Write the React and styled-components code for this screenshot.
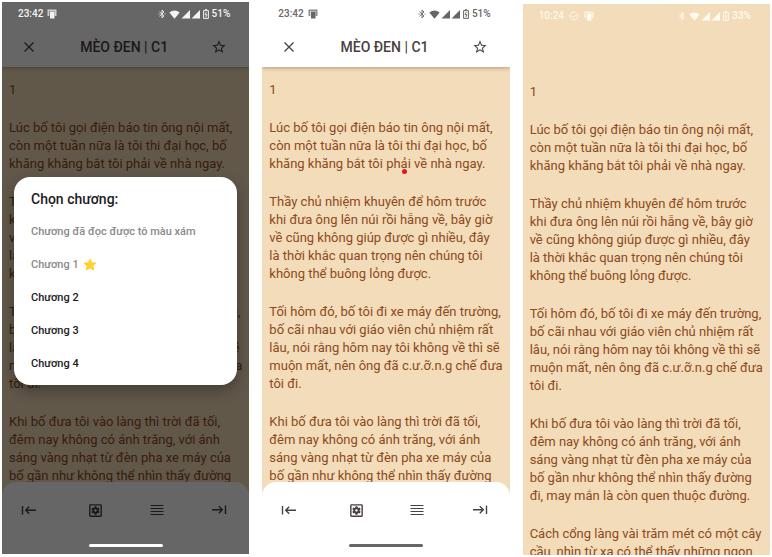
import React from "react";
import styled, { createGlobalStyle, css } from "styled-components";
import { MdStarBorder, MdOutlineSettingsApplications } from "react-icons/md";

const GlobalStyle = createGlobalStyle`
  *, *::before, *::after { box-sizing: border-box; }
  body {
    margin: 0;
    background: #fff;
    font-family: Roboto, "Noto Sans", sans-serif;
  }
  p, h1, h2, ul { margin: 0; padding: 0; }
`;

const Gallery = styled.main`
  display: grid;
  grid-template-columns: repeat(3, minmax(0, 1fr));
  gap: 13px;
  height: 100vh;
  padding: 2px;
`;

const Phone = styled.section`
  position: relative;
  display: flex;
  flex-direction: column;
  min-height: 0;
  overflow: hidden;
  background: #f2dcb9;
  ${(p) => (p.$fullScreen ? css`margin-top: 2px;` : css`margin-bottom: 1px;`)}
`;

const StatusBar = styled.div`
  position: relative;
  z-index: 3;
  flex: none;
  display: flex;
  align-items: center;
  justify-content: space-between;
  height: 24px;
  padding: 0 19px 0 16px;
  font-size: 10px;
  font-weight: 500;
  line-height: 12px;
  color: ${(p) => p.$color};
`;

const StatusGroup = styled.div`
  display: flex;
  align-items: center;
  gap: ${(p) => p.$gap}px;
`;

const TopArea = styled.div`
  position: relative;
  flex: none;
  margin-top: -24px;
  padding-top: 24px;
  background: #fff;
  box-shadow: 0 1px 4px rgba(60, 40, 10, 0.35);
`;

const TitleBar = styled.header`
  display: flex;
  align-items: center;
  justify-content: space-between;
  height: 41px;
  padding: 0 22px 0 19px;
  color: #4a3f42;
`;

const Title = styled.h1`
  font-size: 14px;
  line-height: 18px;
  font-weight: 500;
`;

const IconButton = styled.button`
  display: flex;
  align-items: center;
  justify-content: center;
  width: 16px;
  height: 16px;
  padding: 0;
  border: 0;
  background: none;
  color: inherit;
  cursor: pointer;

  svg { flex: none; }
`;

const Reader = styled.article`
  flex: 1;
  min-height: 0;
  overflow: hidden;
  display: flex;
  flex-direction: column;
  gap: 20px;
  padding: ${(p) => (p.$fullScreen ? 55 : 14)}px 0 0 7px;
  color: #8d4a1c;
`;

const Paragraph = styled.p`
  flex: none;
  font-size: 13px;
  line-height: 18px;
  white-space: pre-line;
`;

const BottomBar = styled.nav`
  position: relative;
  flex: none;
  margin-top: -14px;
  border-radius: 14px 14px 0 0;
  background: #fff;
  color: #4a3f42;
`;

const Tools = styled.div`
  display: grid;
  grid-template-columns: 67fr 61fr 63fr 16px;
  align-items: center;
  height: 56px;
  padding: 0 22px 0 19px;
`;

const HomeStripBase = styled.div`
  flex: none;
  height: 16px;
  margin-bottom: -16px;
  background: #fff;
`;

const HomeStrip = styled.div`
  position: relative;
  z-index: 3;
  flex: none;
  display: flex;
  justify-content: center;
  height: 16px;
  padding-top: 6px;
`;

const HomeHandle = styled.div`
  width: 74px;
  height: 3px;
  border-radius: 2px;
  background: ${(p) => p.$color};
`;

const Scrim = styled.div`
  position: absolute;
  inset: 0;
  z-index: 2;
  display: flex;
  align-items: center;
  justify-content: center;
  padding: 6px 12px 0;
  background: rgba(0, 0, 0, 0.6);
`;

const Dialog = styled.div`
  width: 100%;
  padding: 13px 17px 5px;
  border-radius: 16px;
  background: #fff;
  box-shadow: 0 6px 14px rgba(0, 0, 0, 0.3);
  color: #1d1b1e;
`;

const DialogTitle = styled.h2`
  margin-bottom: 7px;
  font-size: 14px;
  line-height: 18px;
  font-weight: 500;
`;

const Hint = styled.p`
  display: flex;
  align-items: center;
  height: 33px;
  font-size: 11px;
  font-weight: 500;
  color: #8a8a8a;
`;

const ChapterList = styled.ul`
  list-style: none;
`;

const Chapter = styled.button`
  display: flex;
  align-items: center;
  gap: 4px;
  width: 100%;
  height: 33px;
  padding: 0;
  border: 0;
  background: none;
  font: 500 11px/16px Roboto, "Noto Sans", sans-serif;
  color: ${(p) => (p.$read ? "#8a8a8a" : "#1d1b1e")};
  cursor: pointer;
`;

const TouchPoint = styled.span`
  position: absolute;
  top: 167px;
  left: 140px;
  width: 5px;
  height: 5px;
  border-radius: 50%;
  background: #e8141c;
`;

const Svg = ({ w = 16, h = 16, children }) => (
  <svg width={w} height={h} viewBox={`0 0 ${w} ${h}`} fill="none" stroke="currentColor" aria-hidden="true">
    {children}
  </svg>
);

const CloseIcon = () => (
  <Svg><path d="M3.500 3.500l9 9M12.500 3.500l-9 9" strokeWidth="1.300" /></Svg>
);

const FirstIcon = () => (
  <Svg><path d="M1.500 4v8.500M15 8.200H4.500M8.200 4.700L4.700 8.200l3.500 3.500" strokeWidth="1.400" /></Svg>
);

const LastIcon = () => (
  <Svg><path d="M14.500 3.500V12M1 7.700h10.500M7.800 4.200l3.500 3.500-3.500 3.500" strokeWidth="1.400" /></Svg>
);

const ListIcon = () => (
  <Svg><path d="M1.500 3.500h13M1.500 6.500h13M1.500 9.500h13M1.500 12.500h13" strokeWidth="1.200" /></Svg>
);

const ScreenIcon = () => (
  <Svg w={10} h={10}>
    <path d="M0.500 0.500h9v6.500h-1.800V2h-5.400v5H0.500z" fill="currentColor" fillOpacity="0.750" stroke="none" />
    <path d="M3 2.500h4.500v7H3z" fill="currentColor" stroke="none" />
  </Svg>
);

const TaskIcon = () => (
  <Svg w={10} h={10}>
    <path d="M8.700 3.800A4 4 0 1 1 6.600 1.300M3 5l1.500 1.500L9 1.800" strokeWidth="1" />
  </Svg>
);

const BluetoothIcon = () => (
  <Svg w={8} h={10}>
    <path d="M1.500 2.800l4.500 4.200L4 9V1l2 2-4.500 4.200M0.500 5h1M6.500 5h1" strokeWidth="0.900" />
  </Svg>
);

const WifiIcon = () => (
  <Svg w={11} h={9}>
    <path d="M0.300 2.500Q5.500-1.500 10.700 2.500L5.500 8.800z" fill="currentColor" stroke="none" />
  </Svg>
);

const SignalIcon = () => (
  <Svg w={9} h={9}>
    <path d="M9 0v8.500H0.500z" fill="currentColor" stroke="none" />
  </Svg>
);

const BatteryIcon = () => (
  <Svg w={6} h={10}>
    <path d="M0.600 1.600h4.800v7.800H0.600zM2 0.700h2" strokeWidth="1" />
    <path d="M3.400 3L2 5.700h2L2.700 8.300" strokeWidth="0.900" />
  </Svg>
);

const GoldStar = () => (
  <svg width="14" height="13" viewBox="0 0 14 13" role="img" aria-label="star">
    <path
      d="M7 1l1.700 3.700 4.300.4-3.200 2.800.9 4.100L7 9.900 3.300 12l.9-4.100L1 5.100l4.300-.4z"
      fill="#fdd32f"
      stroke="#fdd32f"
      strokeWidth="1"
      strokeLinejoin="round"
    />
  </svg>
);

const STORY = [
  "1",
  "Lúc bố tôi gọi điện báo tin ông nội mất,\ncòn một tuần nữa là tôi thi đại học, bố\nkhăng khăng bắt tôi phải về nhà ngay.",
  "Thầy chủ nhiệm khuyên để hôm trước\nkhi đưa ông lên núi rồi hẵng về, bây giờ\nvề cũng không giúp được gì nhiều, đây\nlà thời khắc quan trọng nên chúng tôi\nkhông thể buông lỏng được.",
  "Tối hôm đó, bố tôi đi xe máy đến trường,\nbố cãi nhau với giáo viên chủ nhiệm rất\nlâu, nói rằng hôm nay tôi không về thì sẽ\nmuộn mất, nên ông đã c.ư.ỡ.n.g chế đưa\ntôi đi.",
  "Khi bố đưa tôi vào làng thì trời đã tối,\nđêm nay không có ánh trăng, với ánh\nsáng vàng nhạt từ đèn pha xe máy của\nbố gần như không thể nhìn thấy đường\nđi, may mắn là còn quen thuộc đường.",
  "Cách cổng làng vài trăm mét có một cây\ncầu, nhìn từ xa có thể thấy những ngọn",
];

const CHAPTERS = [
  { name: "Chương 1", read: true },
  { name: "Chương 2" },
  { name: "Chương 3" },
  { name: "Chương 4" },
];

function Status({ time, battery, color, task }) {
  return (
    <StatusBar $color={color}>
      <StatusGroup $gap={task ? 5 : 4}>
        <span>{time}</span>
        {task && <TaskIcon />}
        <ScreenIcon />
      </StatusGroup>
      <StatusGroup $gap={3}>
        <BluetoothIcon />
        <StatusGroup $gap={1}>
          <WifiIcon />
          <SignalIcon />
          <SignalIcon />
        </StatusGroup>
        <BatteryIcon />
        <span>{battery}</span>
      </StatusGroup>
    </StatusBar>
  );
}

function Story({ fullScreen }) {
  return (
    <Reader $fullScreen={fullScreen}>
      {STORY.map((text) => (
        <Paragraph key={text}>{text}</Paragraph>
      ))}
    </Reader>
  );
}

function ReaderScreen({ statusColor, handleColor, children }) {
  return (
    <Phone>
      <Status time="23:42" battery="51%" color={statusColor} />
      <TopArea>
        <TitleBar>
          <IconButton aria-label="Đóng"><CloseIcon /></IconButton>
          <Title>MÈO ĐEN | C1</Title>
          <IconButton aria-label="Yêu thích"><MdStarBorder size={16} /></IconButton>
        </TitleBar>
      </TopArea>
      <Story />
      <BottomBar>
        <Tools>
          <IconButton aria-label="Chương trước"><FirstIcon /></IconButton>
          <IconButton aria-label="Cài đặt"><MdOutlineSettingsApplications size={17} /></IconButton>
          <IconButton aria-label="Danh sách chương"><ListIcon /></IconButton>
          <IconButton aria-label="Chương sau"><LastIcon /></IconButton>
        </Tools>
      </BottomBar>
      <HomeStripBase />
      <HomeStrip><HomeHandle $color={handleColor} /></HomeStrip>
      {children}
    </Phone>
  );
}

export default function App() {
  return (
    <>
      <GlobalStyle />
      <Gallery>
        <ReaderScreen statusColor="#f4f4f4" handleColor="#fff">
          <Scrim>
            <Dialog role="dialog" aria-labelledby="chapter-title">
              <DialogTitle id="chapter-title">Chọn chương:</DialogTitle>
              <Hint>Chương đã đọc được tô màu xám</Hint>
              <ChapterList>
                {CHAPTERS.map(({ name, read }) => (
                  <li key={name}>
                    <Chapter $read={read}>
                      {name}
                      {read && <GoldStar />}
                    </Chapter>
                  </li>
                ))}
              </ChapterList>
            </Dialog>
          </Scrim>
        </ReaderScreen>
        <ReaderScreen statusColor="#666" handleColor="#666">
          <TouchPoint />
        </ReaderScreen>
        <Phone $fullScreen>
          <Status time="10:24" battery="33%" color="#fffaf0" task />
          <Story fullScreen />
        </Phone>
      </Gallery>
    </>
  );
}
